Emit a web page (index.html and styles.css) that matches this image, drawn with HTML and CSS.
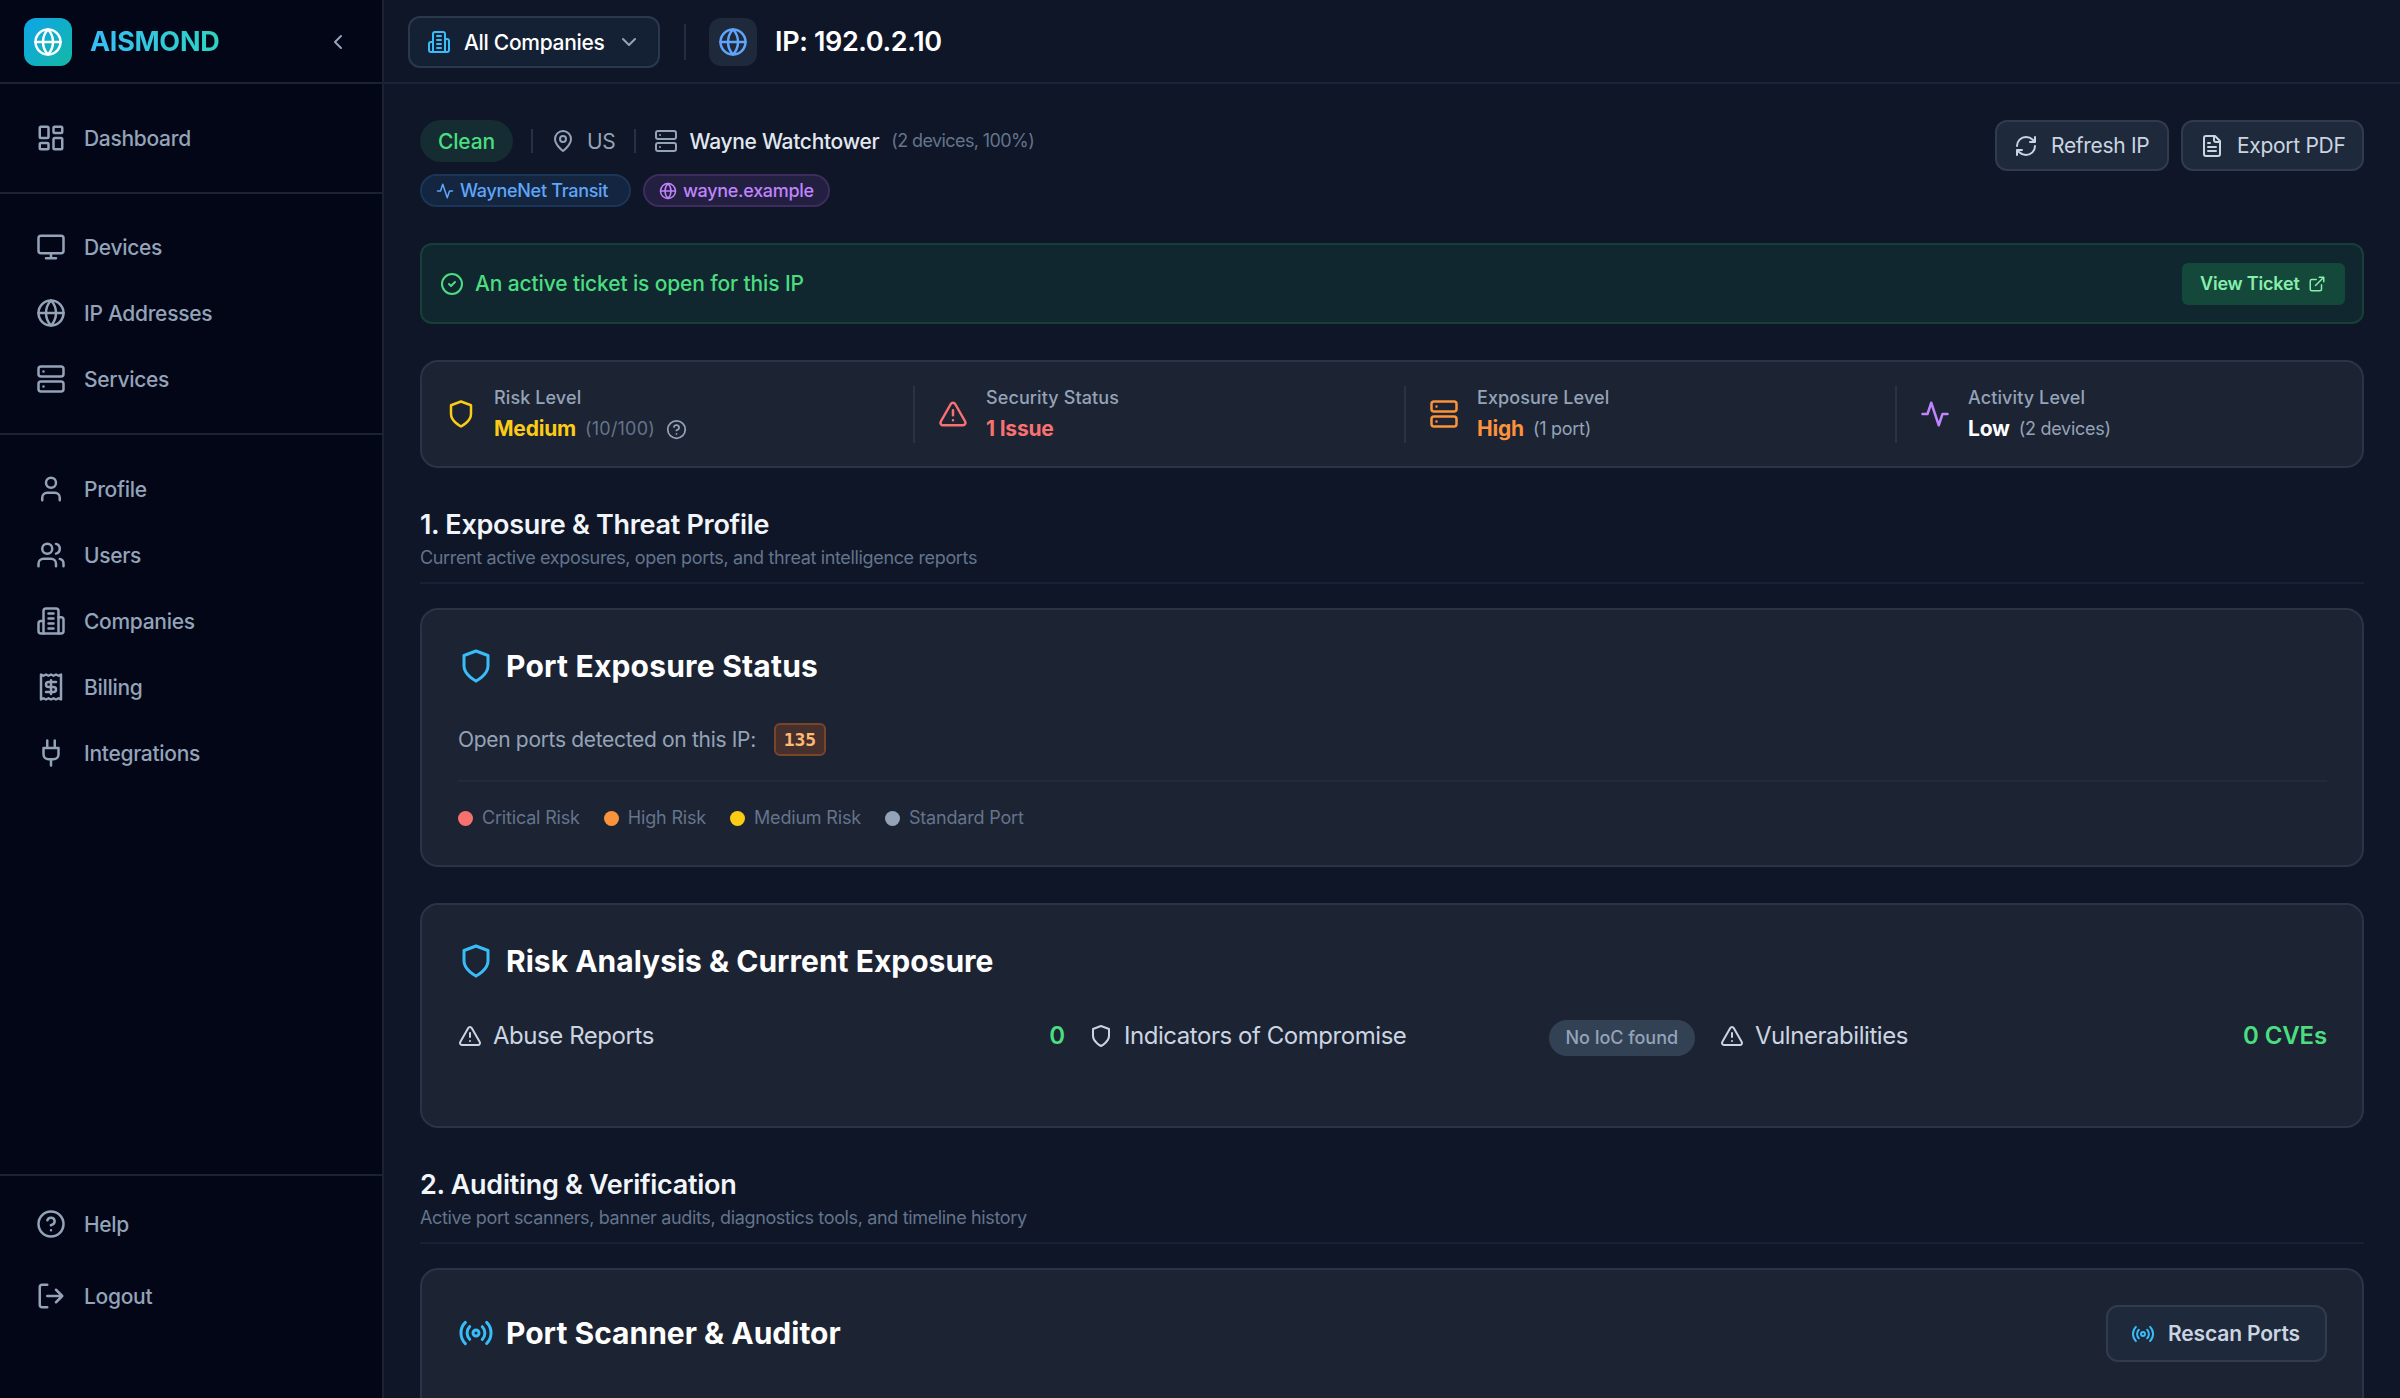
FILE: index.html
```html
<!doctype html>
<html lang="en">
<head>
<meta charset="utf-8">
<title>IP: 192.0.2.10 - AISMOND</title>
<link rel="stylesheet" href="styles.css">
</head>
<body>
<!-- icon sprite -->
<svg class="sprite">
	<symbol id="globe" viewBox="0 0 24 24"><circle cx="12" cy="12" r="10"/><path d="M12 2a14.5 14.5 0 0 0 0 20 14.5 14.5 0 0 0 0-20"/><path d="M2 12h20"/></symbol>
	<symbol id="chevron-left" viewBox="0 0 24 24"><path d="m15 18-6-6 6-6"/></symbol>
	<symbol id="chevron-down" viewBox="0 0 24 24"><path d="m6 9 6 6 6-6"/></symbol>
	<symbol id="dashboard" viewBox="0 0 24 24"><rect width="7" height="9" x="3" y="3" rx="1"/><rect width="7" height="5" x="14" y="3" rx="1"/><rect width="7" height="9" x="14" y="12" rx="1"/><rect width="7" height="5" x="3" y="16" rx="1"/></symbol>
	<symbol id="monitor" viewBox="0 0 24 24"><rect width="20" height="14" x="2" y="3" rx="2"/><path d="M8 21h8M12 17v4"/></symbol>
	<symbol id="server" viewBox="0 0 24 24"><rect width="20" height="8" x="2" y="2" rx="2"/><rect width="20" height="8" x="2" y="14" rx="2"/><path d="M6 6h.01M6 18h.01"/></symbol>
	<symbol id="user" viewBox="0 0 24 24"><path d="M19 21v-2a4 4 0 0 0-4-4H9a4 4 0 0 0-4 4v2"/><circle cx="12" cy="7" r="4"/></symbol>
	<symbol id="users" viewBox="0 0 24 24"><path d="M16 21v-2a4 4 0 0 0-4-4H6a4 4 0 0 0-4 4v2"/><circle cx="9" cy="7" r="4"/><path d="M22 21v-2a4 4 0 0 0-3-3.87M16 3.13a4 4 0 0 1 0 7.75"/></symbol>
	<symbol id="building" viewBox="0 0 24 24"><path d="M6 22V4a2 2 0 0 1 2-2h8a2 2 0 0 1 2 2v18Z"/><path d="M6 12H4a2 2 0 0 0-2 2v6a2 2 0 0 0 2 2h2M18 9h2a2 2 0 0 1 2 2v9a2 2 0 0 1-2 2h-2M10 6h4M10 10h4M10 14h4M10 18h4"/></symbol>
	<symbol id="receipt" viewBox="0 0 24 24"><path d="M4 2v20l2-1 2 1 2-1 2 1 2-1 2 1 2-1 2 1V2l-2 1-2-1-2 1-2-1-2 1-2-1-2 1Z"/><path d="M16 8h-6a2 2 0 1 0 0 4h4a2 2 0 1 1 0 4H8M12 17.5v-11"/></symbol>
	<symbol id="plug" viewBox="0 0 24 24"><path d="M12 22v-5M9 8V2M15 8V2M18 8v5a4 4 0 0 1-4 4h-4a4 4 0 0 1-4-4V8Z"/></symbol>
	<symbol id="help" viewBox="0 0 24 24"><circle cx="12" cy="12" r="10"/><path d="M9.09 9a3 3 0 0 1 5.83 1c0 2-3 3-3 3M12 17h.01"/></symbol>
	<symbol id="logout" viewBox="0 0 24 24"><path d="M9 21H5a2 2 0 0 1-2-2V5a2 2 0 0 1 2-2h4M16 17l5-5-5-5M21 12H9"/></symbol>
	<symbol id="pin" viewBox="0 0 24 24"><path d="M20 10c0 6-8 12-8 12s-8-6-8-12a8 8 0 0 1 16 0Z"/><circle cx="12" cy="10" r="3"/></symbol>
	<symbol id="activity" viewBox="0 0 24 24"><path d="M22 12h-4l-3 9L9 3l-3 9H2"/></symbol>
	<symbol id="refresh" viewBox="0 0 24 24"><path d="M3 12a9 9 0 0 1 9-9 9.75 9.75 0 0 1 6.74 2.74L21 8M21 3v5h-5M21 12a9 9 0 0 1-9 9 9.75 9.75 0 0 1-6.74-2.74L3 16M8 16H3v5"/></symbol>
	<symbol id="file" viewBox="0 0 24 24"><path d="M15 2H6a2 2 0 0 0-2 2v16a2 2 0 0 0 2 2h12a2 2 0 0 0 2-2V7ZM14 2v4a2 2 0 0 0 2 2h4M10 9H8M16 13H8M16 17H8"/></symbol>
	<symbol id="check" viewBox="0 0 24 24"><circle cx="12" cy="12" r="10"/><path d="m9 12 2 2 4-4"/></symbol>
	<symbol id="external" viewBox="0 0 24 24"><path d="M15 3h6v6M10 14 21 3M18 13v6a2 2 0 0 1-2 2H5a2 2 0 0 1-2-2V8a2 2 0 0 1 2-2h6"/></symbol>
	<symbol id="shield" viewBox="0 0 24 24"><path d="M12 22s8-4 8-10V5l-8-3-8 3v7c0 6 8 10 8 10"/></symbol>
	<symbol id="alert" viewBox="0 0 24 24"><path d="m21.73 18-8-14a2 2 0 0 0-3.48 0l-8 14A2 2 0 0 0 4 21h16a2 2 0 0 0 1.73-3ZM12 9v4M12 17h.01"/></symbol>
	<symbol id="radio" viewBox="0 0 24 24"><path d="M4.9 19.1C1 15.2 1 8.8 4.9 4.9M7.8 16.2c-2.3-2.3-2.3-6.1 0-8.5"/><circle cx="12" cy="12" r="2"/><path d="M16.2 7.8c2.3 2.3 2.3 6.1 0 8.5M19.1 4.9C23 8.8 23 15.1 19.1 19"/></symbol>
</svg>

<div class="app">
	<!-- sidebar -->
	<aside class="sidebar">
		<div class="brand">
			<div class="brand-logo"><svg class="icon icon-lg"><use href="#globe"/></svg></div>
			<span class="brand-name">AISMOND</span>
			<svg class="icon collapse"><use href="#chevron-left"/></svg>
		</div>
		<nav class="nav-group">
			<a class="nav-item"><svg class="icon icon-lg"><use href="#dashboard"/></svg><span>Dashboard</span></a>
		</nav>
		<nav class="nav-group assets">
			<a class="nav-item"><svg class="icon icon-lg"><use href="#monitor"/></svg><span>Devices</span></a>
			<a class="nav-item"><svg class="icon icon-lg"><use href="#globe"/></svg><span>IP Addresses</span></a>
			<a class="nav-item"><svg class="icon icon-lg"><use href="#server"/></svg><span>Services</span></a>
		</nav>
		<nav class="nav-group last">
			<a class="nav-item"><svg class="icon icon-lg"><use href="#user"/></svg><span>Profile</span></a>
			<a class="nav-item"><svg class="icon icon-lg"><use href="#users"/></svg><span>Users</span></a>
			<a class="nav-item"><svg class="icon icon-lg"><use href="#building"/></svg><span>Companies</span></a>
			<a class="nav-item"><svg class="icon icon-lg"><use href="#receipt"/></svg><span>Billing</span></a>
			<a class="nav-item"><svg class="icon icon-lg"><use href="#plug"/></svg><span>Integrations</span></a>
		</nav>
		<nav class="nav-footer">
			<a class="nav-item"><svg class="icon icon-lg"><use href="#help"/></svg><span>Help</span></a>
			<a class="nav-item"><svg class="icon icon-lg"><use href="#logout"/></svg><span>Logout</span></a>
		</nav>
	</aside>

	<div class="page">
		<header class="topbar">
			<button class="company-select"><svg class="icon sky"><use href="#building"/></svg><span>All Companies</span><svg class="icon muted"><use href="#chevron-down"/></svg></button>
			<span class="topbar-divider"></span>
			<div class="title-icon"><svg class="icon icon-lg"><use href="#globe"/></svg></div>
			<h1>IP: 192.0.2.10</h1>
		</header>

		<main class="content">
			<div class="hero">
				<div class="hero-info">
					<div class="meta">
						<span class="status">Clean</span>
						<i class="sep"></i>
						<span class="meta-item"><svg class="icon"><use href="#pin"/></svg><span>US</span></span>
						<i class="sep"></i>
						<span class="meta-item owner"><svg class="icon"><use href="#server"/></svg><b>Wayne Watchtower</b><small>(2 devices, 100%)</small></span>
					</div>
					<div class="tags">
						<span class="tag tag-blue"><svg class="icon icon-sm"><use href="#activity"/></svg><span>WayneNet Transit</span></span>
						<span class="tag tag-purple"><svg class="icon icon-sm"><use href="#globe"/></svg><span>wayne.example</span></span>
					</div>
				</div>
				<div class="actions">
					<button class="btn btn-refresh"><svg class="icon"><use href="#refresh"/></svg><span>Refresh IP</span></button>
					<button class="btn btn-export"><svg class="icon"><use href="#file"/></svg><span>Export PDF</span></button>
				</div>
			</div>

			<div class="ticket">
				<svg class="icon"><use href="#check"/></svg>
				<span class="ticket-text">An active ticket is open for this IP</span>
				<button class="ticket-btn"><span>View Ticket</span><svg class="icon icon-sm"><use href="#external"/></svg></button>
			</div>

			<div class="stats">
				<div class="stat">
					<svg class="icon icon-lg yellow"><use href="#shield"/></svg>
					<div>
						<div class="stat-label">Risk Level</div>
						<div class="stat-value"><b class="yellow">Medium</b><small class="dim">(10/100)</small><svg class="icon stat-help"><use href="#help"/></svg></div>
					</div>
				</div>
				<div class="stat">
					<svg class="icon icon-lg red"><use href="#alert"/></svg>
					<div>
						<div class="stat-label">Security Status</div>
						<div class="stat-value"><b class="red">1 Issue</b></div>
					</div>
				</div>
				<div class="stat">
					<svg class="icon icon-lg orange"><use href="#server"/></svg>
					<div>
						<div class="stat-label">Exposure Level</div>
						<div class="stat-value"><b class="orange">High</b><small>(1 port)</small></div>
					</div>
				</div>
				<div class="stat">
					<svg class="icon icon-lg purple"><use href="#activity"/></svg>
					<div>
						<div class="stat-label">Activity Level</div>
						<div class="stat-value"><b>Low</b><small>(2 devices)</small></div>
					</div>
				</div>
			</div>

			<div class="section-head">
				<h2>1. Exposure &amp; Threat Profile</h2>
				<p>Current active exposures, open ports, and threat intelligence reports</p>
			</div>

			<section class="card card-ports">
				<div class="card-title"><svg class="icon icon-xl sky"><use href="#shield"/></svg><h3>Port Exposure Status</h3></div>
				<div class="ports"><span>Open ports detected on this IP:</span><span class="port">135</span></div>
				<div class="legend">
					<span><i class="dot dot-red"></i>Critical Risk</span>
					<span><i class="dot dot-orange"></i>High Risk</span>
					<span><i class="dot dot-yellow"></i>Medium Risk</span>
					<span><i class="dot dot-gray"></i>Standard Port</span>
				</div>
			</section>

			<section class="card card-risk">
				<div class="card-title"><svg class="icon icon-xl sky"><use href="#shield"/></svg><h3>Risk Analysis &amp; Current Exposure</h3></div>
				<div class="risks">
					<div class="risk"><svg class="icon"><use href="#alert"/></svg><span>Abuse Reports</span><b>0</b></div>
					<div class="risk"><svg class="icon"><use href="#shield"/></svg><span>Indicators of Compromise</span><i class="badge">No IoC found</i></div>
					<div class="risk"><svg class="icon"><use href="#alert"/></svg><span>Vulnerabilities</span><b>0 CVEs</b></div>
				</div>
			</section>

			<div class="section-head">
				<h2>2. Auditing &amp; Verification</h2>
				<p>Active port scanners, banner audits, diagnostics tools, and timeline history</p>
			</div>

			<section class="card card-scanner">
				<div class="card-title"><svg class="icon icon-xl sky"><use href="#radio"/></svg><h3>Port Scanner &amp; Auditor</h3></div>
				<button class="btn btn-rescan"><svg class="icon sky"><use href="#radio"/></svg><span>Rescan Ports</span></button>
			</section>
		</main>
	</div>
</div>
</body>
</html>
```
FILE: styles.css
```css
* {
	box-sizing: border-box;
	margin: 0;
	padding: 0;
}
body {
	background: #0e1628;
	color: #fff;
	font-family: Inter, "Liberation Sans", sans-serif;
	font-size: 21px;
	line-height: 30px;
	letter-spacing: -0.3px;
	white-space: nowrap;
}
button {
	font: inherit;
	letter-spacing: inherit;
	color: inherit;
	background: none;
	border: none;
}
i {
	font-style: normal;
}
.sprite {
	display: none;
}
.icon {
	width: 24px;
	height: 24px;
	flex: none;
	fill: none;
	stroke: currentColor;
	stroke-width: 2;
	stroke-linecap: round;
	stroke-linejoin: round;
}
.icon-sm {
	width: 18px;
	height: 18px;
}
.icon-lg {
	width: 30px;
	height: 30px;
}
.icon-xl {
	width: 36px;
	height: 36px;
}
.sky { color: #38bdf8; }
.muted { color: #94a3b8; }
.yellow { color: #facc15; }
.red { color: #f87171; }
.orange { color: #fb923c; }
.purple { color: #c084fc; }

.app {
	display: flex;
	height: 100vh;
	overflow: hidden;
}

/* sidebar */
.sidebar {
	display: flex;
	flex-direction: column;
	width: 384px;
	background: #020617;
	border-right: 2px solid #1a2233;
}
.brand {
	display: flex;
	align-items: center;
	height: 84px;
	padding: 0 32px 0 24px;
	border-bottom: 2px solid #1a2233;
}
.brand-logo {
	display: flex;
	align-items: center;
	justify-content: center;
	width: 48px;
	height: 48px;
	margin-top: 2px;
	border-radius: 12px;
	background: linear-gradient(135deg, #0ea5e9, #14b8a6);
}
.brand-name {
	margin: 2px 0 0 18px;
	font-size: 27px;
	font-weight: 700;
	letter-spacing: -0.3px;
	background: linear-gradient(90deg, #38bdf8, #2dd4bf);
	-webkit-background-clip: text;
	background-clip: text;
	color: transparent;
}
.collapse {
	margin: 2px 0 0 auto;
	color: #94a3b8;
}
.nav-group {
	display: flex;
	flex-direction: column;
	gap: 6px;
	padding: 24px 18px;
	border-bottom: 2px solid #1a2233;
}
.nav-group.assets {
	padding: 23px 18px 24px;
}
.nav-group.last {
	border-bottom: none;
}
.nav-item {
	display: flex;
	align-items: center;
	gap: 18px;
	height: 60px;
	padding: 0 18px;
	color: #94a3b8;
	font-weight: 500;
}
.nav-item span {
	padding-top: 2px;
}
.nav-footer {
	display: flex;
	flex-direction: column;
	gap: 12px;
	margin-top: auto;
	padding: 18px 18px 72px;
	border-top: 2px solid #1a2233;
}

/* top bar */
.page {
	flex: 1;
	min-width: 0;
}
.topbar {
	display: flex;
	align-items: center;
	height: 84px;
	padding: 2px 24px 0;
	border-bottom: 2px solid #1b2436;
}
.company-select {
	display: flex;
	align-items: center;
	width: 252px;
	height: 52px;
	padding: 0 17px;
	border: 2px solid #2b384b;
	border-radius: 12px;
	background: #142033;
	font-weight: 500;
}
.company-select span {
	margin: 1px auto 0 13px;
}
.topbar-divider {
	width: 2px;
	height: 36px;
	margin: 0 23px 0 24px;
	background: #222c3f;
}
.title-icon {
	display: flex;
	align-items: center;
	justify-content: center;
	width: 48px;
	height: 48px;
	margin-right: 18px;
	border-radius: 12px;
	background: #1e293b;
	color: #60a5fa;
}
.topbar h1 {
	font-size: 27px;
	font-weight: 600;
	letter-spacing: -0.35px;
}

/* content */
.content {
	padding: 36px;
}
.hero {
	display: flex;
	justify-content: space-between;
	align-items: flex-start;
	height: 87px;
	margin-bottom: 36px;
}
.meta {
	display: flex;
	align-items: center;
	height: 42px;
	margin-bottom: 12px;
}
.status {
	padding: 7px 18px 5px;
	border-radius: 21px;
	background: #152c33;
	color: #4ade80;
	font-weight: 500;
	letter-spacing: -0.16px;
}
.sep {
	width: 2px;
	height: 24px;
	margin: 0 18px;
	background: #263145;
}
.meta-item {
	display: flex;
	align-items: center;
	gap: 12px;
	color: #94a3b8;
}
.meta-item span,
.owner b {
	padding-top: 2px;
}
.owner b {
	color: #e2e8f0;
	font-weight: 500;
}
.owner small {
	color: #64748b;
	font-size: 18px;
	letter-spacing: -0.6px;
}
.tags {
	display: flex;
	gap: 12px;
}
.tag {
	display: flex;
	align-items: center;
	gap: 6px;
	height: 33px;
	padding: 0 14px;
	border: 2px solid;
	border-radius: 17px;
	font-size: 18px;
	font-weight: 500;
}
.tag-blue {
	width: 211px;
	color: #60a5fa;
	background: #14253f;
	border-color: #1b3558;
}
.tag-purple {
	width: 187px;
	color: #c084fc;
	background: #221f41;
	border-color: #3d2c5d;
}
.actions {
	display: flex;
	gap: 12px;
}
.btn {
	display: flex;
	align-items: center;
	gap: 13px;
	height: 51px;
	padding: 0 17px;
	border: 2px solid #303b4e;
	border-radius: 12px;
	background: #1e293b;
	color: #cbd5e1;
}
.btn-refresh {
	width: 174px;
}
.btn-export {
	width: 183px;
}

.ticket {
	display: flex;
	align-items: center;
	height: 81px;
	margin-bottom: 36px;
	padding: 0 17px 0 18px;
	border: 2px solid #164037;
	border-radius: 12px;
	background: #10272f;
	color: #4ade80;
	font-weight: 500;
}
.ticket-text {
	margin: 1px 0 0 11px;
	letter-spacing: -0.13px;
}
.ticket-btn {
	display: flex;
	align-items: center;
	gap: 8px;
	width: 163px;
	height: 42px;
	margin-left: auto;
	padding-left: 18px;
	border-radius: 6px;
	background: #14483a;
	color: #86efac;
	font-size: 18px;
	font-weight: 600;
	letter-spacing: -0.2px;
}

/* stats strip */
.stats {
	display: grid;
	grid-template-columns: repeat(4, 1fr);
	column-gap: 24px;
	align-items: center;
	height: 108px;
	margin-bottom: 35px;
	border: 2px solid #2b3447;
	border-radius: 18px;
	background: #1c2333;
}
.stat {
	display: flex;
	align-items: center;
	gap: 18px;
	height: 57px;
	padding: 0 24px;
}
.stat + .stat {
	padding: 0 23px;
	border-left: 2px solid #2a3346;
}
.stat-label {
	color: #94a3b8;
	font-size: 18px;
	font-weight: 500;
	line-height: 27px;
	letter-spacing: 0.1px;
}
.stat-value {
	display: flex;
	align-items: center;
	gap: 9px;
	height: 30px;
	margin-top: 3px;
	letter-spacing: -0.2px;
}
.stat-value small {
	color: #94a3b8;
	font-size: 18px;
	letter-spacing: -0.28px;
}
.stat-value small.dim {
	color: #64748b;
	letter-spacing: 0.2px;
}
.stat-help {
	width: 21px;
	height: 21px;
	margin-left: 2px;
	color: #94a3b8;
}

.section-head {
	height: 81px;
	margin-bottom: 24px;
	border-bottom: 2px solid #182134;
}
.section-head h2 {
	padding-top: 1px;
	font-size: 27px;
	font-weight: 600;
	line-height: 42px;
	color: #f1f5f9;
}
.section-head p {
	font-size: 18px;
	line-height: 24px;
	letter-spacing: -0.35px;
	color: #64748b;
}

/* cards */
.card {
	margin-bottom: 36px;
	padding: 34px 35px 34px 36px;
	border: 2px solid #2b3447;
	border-radius: 18px;
	background: #1c2333;
}
.card-title {
	display: flex;
	align-items: center;
	gap: 12px;
	height: 44px;
}
.card-title h3 {
	font-size: 30px;
	font-weight: 700;
	letter-spacing: 0;
}
.card-ports h3 {
	letter-spacing: 0.2px;
}
.ports {
	display: flex;
	align-items: center;
	gap: 18px;
	height: 33px;
	margin-top: 35px;
	color: #94a3b8;
	letter-spacing: -0.32px;
}
.port {
	height: 33px;
	width: 52px;
	border: 2px solid #7a4527;
	border-radius: 6px;
	background: #45302e;
	color: #fdba74;
	font: 700 18px/29px "DejaVu Sans Mono", monospace;
	letter-spacing: 0;
	text-align: center;
}
.legend {
	display: flex;
	gap: 24px;
	margin-top: 24px;
	padding-top: 23px;
	border-top: 2px solid #222b3d;
	font-size: 18px;
	line-height: 26px;
	letter-spacing: -0.18px;
	color: #64748b;
}
.legend span {
	display: flex;
	align-items: center;
	gap: 9px;
}
.dot {
	width: 15px;
	height: 15px;
	border-radius: 50%;
}
.dot-red { background: #f87171; }
.dot-orange { background: #fb923c; }
.dot-yellow { background: #facc15; }
.dot-gray { background: #94a3b8; }

.card-risk {
	height: 225px;
	margin-bottom: 35px;
}
.risks {
	display: grid;
	grid-template-columns: repeat(3, 1fr);
	gap: 24px;
	margin-top: 35px;
}
.risk {
	display: flex;
	align-items: center;
	gap: 11px;
	height: 36px;
	font-size: 24px;
	letter-spacing: -0.45px;
	color: #cbd5e1;
}
.risk b {
	margin-left: auto;
	color: #4ade80;
	font-weight: 600;
	letter-spacing: -0.13px;
}
.badge {
	height: 36px;
	margin: 4px 1px 0 auto;
	padding: 0 17px;
	border-radius: 18px;
	background: #334155;
	color: #94a3b8;
	font-size: 18px;
	font-weight: 500;
	line-height: 36px;
	letter-spacing: -0.05px;
}
.card-scanner {
	display: flex;
	justify-content: space-between;
	align-items: flex-start;
	height: 260px;
}
.card-scanner .card-title {
	height: 58px;
}
.btn-rescan {
	width: 221px;
	height: 57px;
	margin-top: 1px;
	padding: 0 23px;
	font-weight: 600;
	letter-spacing: -0.15px;
}
```
